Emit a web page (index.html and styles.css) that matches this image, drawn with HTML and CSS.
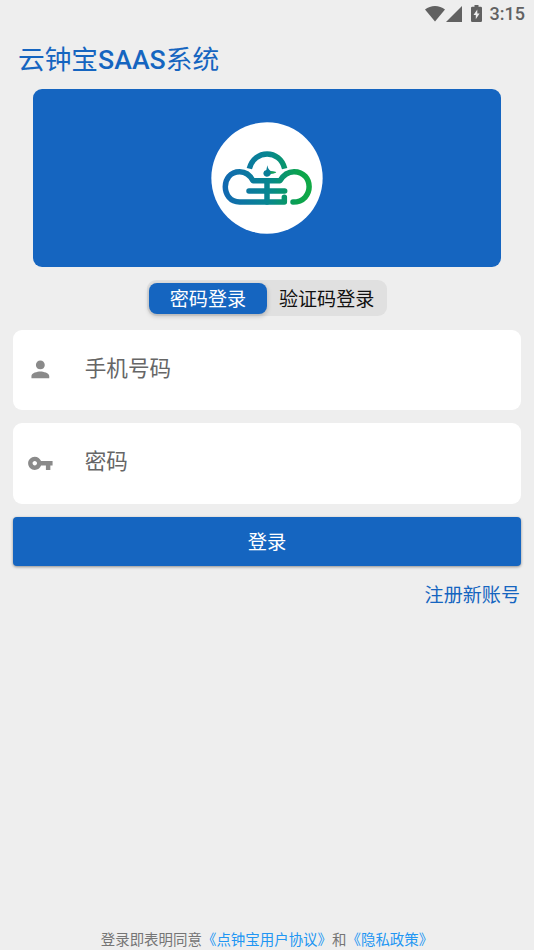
FILE: index.html
```
<!DOCTYPE html>
<html lang="zh-CN">
<head>
<meta charset="utf-8">
<title>云钟宝SAAS系统</title>
<link rel="stylesheet" href="styles.css">
</head>
<body>
<div class="screen">
  <header class="status">
    <svg class="wifi" viewBox="0 0 20 16"><path d="M0 3.6C5.6-1.2 14.400-1.2 20 3.600L10 15.500z"/></svg>
    <svg class="signal" viewBox="0 0 16 16"><path d="M16 0v16H0z"/></svg>
    <svg class="battery" viewBox="0 0 11 17"><path fill-rule="evenodd" d="M3.500 0h4v1.700h2.300q1.200 0 1.200 1.200v12.900q0 1.200-1.200 1.200H1.200Q0 17 0 15.800V2.900q0-1.200 1.200-1.200h2.300zM6.300 4.500L2.500 10h2.300v4.300L8.600 8.600H6.300z"/></svg>
    <span class="time">3:15</span>
  </header>
  <h1 class="title">云钟宝<span class="latin">SAAS</span>系统</h1>
  <section class="banner">
    <svg class="logo" viewBox="18 18 336 336">
      <defs>
        <linearGradient id="brand" gradientUnits="userSpaceOnUse" x1="55" y1="0" x2="320" y2="0">
          <stop offset="0" stop-color="#1268b1"/>
          <stop offset=".5" stop-color="#078691"/>
          <stop offset=".85" stop-color="#0ba24e"/>
          <stop offset="1" stop-color="#12aa45"/>
        </linearGradient>
      </defs>
      <circle cx="186" cy="186" r="167" fill="#fff"/>
      <g class="strokes">
        <path d="M133 158C148 99 225 99 239 158" stroke-linecap="butt"/>
        <path d="M238 244V258H104C47 258 46 167 104 167C122 167 135 177 144 194H225C235 177 250 167 267 167C327 167 329 258 264 258"/>
        <path d="M132 225H239M186 194V258"/>
      </g>
      <path fill="#087f98" d="M187 148Q189 161 197 165L213 168Q210 173 198 173Q194 182 185 182Q175 180 175 171Q176 164 184 162z"/>
      <path fill="#16a650" d="M196 166L214 168L210 171L197 173z"/>
    </svg>
  </section>
  <nav class="tabs">
    <button class="tab active">密码登录</button>
    <button class="tab">验证码登录</button>
  </nav>
  <main class="form">
    <label class="field">
      <svg class="icon" viewBox="0 0 24 24"><path d="M12 12c2.210 0 4-1.790 4-4s-1.790-4-4-4-4 1.790-4 4 1.790 4 4 4zm0 2c-2.670 0-8 1.340-8 4v2h16v-2c0-2.660-5.330-4-8-4z"/></svg>
      <span class="hint">手机号码</span>
    </label>
    <label class="field">
      <svg class="icon" viewBox="0 0 24 24"><path d="M12.650 10C11.830 7.670 9.610 6 7 6c-3.310 0-6 2.690-6 6s2.690 6 6 6c2.610 0 4.830-1.670 5.650-4H17v4h4v-4h2v-4H12.650zM7 14c-1.100 0-2-.9-2-2s.9-2 2-2 2 .9 2 2-.9 2-2 2z"/></svg>
      <span class="hint">密码</span>
    </label>
    <button class="submit">登录</button>
    <a class="register">注册新账号</a>
  </main>
  <footer class="terms">登录即表明同意<a>《点钟宝用户协议》</a>和<a>《隐私政策》</a></footer>
</div>
</body>
</html>
```
FILE: styles.css
```
* { box-sizing: border-box; }
body {
  margin: 0;
  background: #eee;
  font-family: Roboto, "Noto Sans CJK SC", sans-serif;
}
button { font: inherit; border: 0; padding: 0; }
.screen {
  height: 950px;
  display: flex;
  flex-direction: column;
  overflow: hidden;
}
.status {
  height: 27px;
  flex: none;
  display: flex;
  align-items: center;
  justify-content: flex-end;
  padding-right: 9px;
  color: #616161;
}
.status svg { fill: #616161; }
.wifi { width: 20px; height: 16px; margin-right: 1px; }
.signal { width: 16px; height: 16px; margin-right: 9px; }
.battery { width: 11px; height: 17px; margin-right: 8px; }
.time { font-size: 18px; font-weight: 500; line-height: 27px; }
.title {
  margin: 0;
  height: 62px;
  flex: none;
  padding-left: 18px;
  font-size: 26.7px;
  font-weight: 400;
  line-height: 67px;
  color: #1565c0;
}
.latin { font-weight: 500; }
.banner {
  height: 178px;
  flex: none;
  margin: 0 33px;
  border-radius: 9px;
  background: #1565c0;
  display: flex;
  align-items: center;
  justify-content: center;
}
.logo { width: 112px; height: 112px; }
.strokes {
  fill: none;
  stroke: url(#brand);
  stroke-width: 16.5;
  stroke-linecap: round;
  stroke-linejoin: round;
}
.tabs {
  display: flex;
  flex: none;
  align-self: center;
  width: 240px;
  height: 36px;
  margin: 13px 0 13.5px;
  padding: 2.5px 1px 2px 1.5px;
  border-radius: 9px;
  background: #e0e0e0;
}
.tab {
  flex: 1;
  padding-top: 3px;
  border-radius: 8px;
  background: transparent;
  color: #111;
  font-size: 19.1px;
  line-height: 28px;
  white-space: nowrap;
}
.tab.active {
  background: #1565c0;
  color: #fff;
  box-shadow: 0 2px 5px rgba(0, 0, 0, .22);
}
.form {
  display: flex;
  flex-direction: column;
  padding: 0 13px;
}
.field {
  height: 80.5px;
  margin-bottom: 13px;
  display: flex;
  align-items: center;
  padding-left: 13.5px;
  border-radius: 9px;
  background: #fff;
}
.icon { width: 26.7px; height: 26.7px; fill: #8a8a8a; }
.hint {
  margin: -7px 0 0 31.5px;
  font-size: 21.6px;
  color: #666;
}
.submit {
  height: 49px;
  border-radius: 4px;
  background: #1565c0;
  color: #fff;
  font-size: 19.3px;
  box-shadow: 0 1px 3px rgba(0, 0, 0, .4);
}
.register {
  align-self: flex-end;
  margin: 15px 1px 0 0;
  font-size: 19.1px;
  line-height: 29px;
  color: #1565c0;
}
.terms {
  margin-top: auto;
  text-align: center;
  font-size: 14.46px;
  line-height: 18px;
  color: #757575;
  white-space: nowrap;
}
.terms a { color: #2196f3; }
```
